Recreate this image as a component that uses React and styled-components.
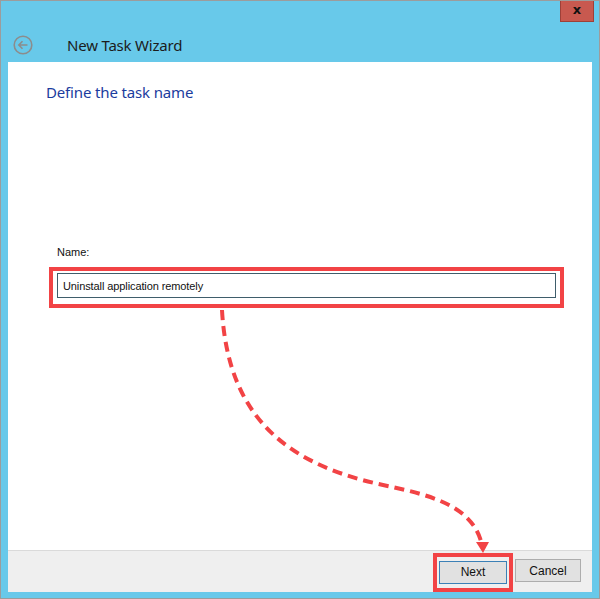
import React from "react";
import styled, { createGlobalStyle } from "styled-components";

const GlobalStyle = createGlobalStyle`
  html, body {
    margin: 0;
    padding: 0;
    background: #ffffff;
  }
  * {
    box-sizing: border-box;
  }
`;

const Window = styled.div`
  position: relative;
  width: 600px;
  height: 599px;
  display: flex;
  flex-direction: column;
  border: 1px solid #9c9c9c;
  background-color: #68c9ea;
  font-family: "Noto Sans", "Open Sans", sans-serif;
  overflow: hidden;
`;

const Controls = styled.div`
  height: 21px;
  display: flex;
  justify-content: flex-end;
  padding-right: 5px;
`;

const CloseButton = styled.div`
  width: 34px;
  height: 22px;
  margin-top: -1px;
  display: flex;
  align-items: center;
  justify-content: center;
  background-color: #c8594f;
  border: 1px solid #9e4038;
  border-top: none;
  color: #111;
  font-family: "DejaVu Sans", sans-serif;
  font-weight: 700;
  font-size: 13px;
  line-height: 1;
  padding-bottom: 2px;
`;

const Header = styled.div`
  height: 40px;
  padding: 5px 0 0 12px;
  display: flex;
  align-items: center;
  gap: 34px;
`;

const Title = styled.div`
  font-size: 15px;
  color: #1c1c1c;
  letter-spacing: -0.2px;
`;

const Body = styled.div`
  flex: 1;
  display: flex;
  flex-direction: column;
  margin: 0 7px 6px 7px;
`;

const Content = styled.div`
  flex: 1;
  background: #ffffff;
  padding: 20px 28px 0 38px;
`;

const Heading = styled.div`
  font-size: 15px;
  line-height: 20px;
  color: #1b3c9e;
  letter-spacing: -0.15px;
`;

const Field = styled.div`
  margin-top: 144px;
  margin-left: 3px;
`;

const Label = styled.div`
  font-family: "Liberation Sans", Arial, sans-serif;
  font-size: 11px;
  line-height: 13px;
  color: #111;
  margin: 0 0 8px 8px;
`;

const Highlight = styled.div`
  border: 4px solid #f24345;
  padding: ${(p) => p.$pad || "2px 4px 6px 4px"};
`;

const Input = styled.input`
  display: block;
  width: 100%;
  height: 25px;
  border: 1px solid #3f5d6b;
  padding: 0 5px;
  font-family: "Liberation Sans", Arial, sans-serif;
  font-size: 11px;
  letter-spacing: -0.1px;
  color: #111;
  background: #fff;
  outline: none;
`;

const Footer = styled.div`
  height: 42px;
  background: #efefef;
  border-top: 1px solid #dadada;
  display: flex;
  justify-content: flex-end;
  align-items: flex-start;
  padding: 2px 11px 0 0;
`;

const Button = styled.button`
  width: ${(p) => p.$w || 67}px;
  height: 23px;
  margin-top: ${(p) => p.$top || 0}px;
  margin-left: ${(p) => p.$left || 0}px;
  background: #e1e1e1;
  border: 1px solid ${(p) => (p.$focused ? "#3b80b6" : "#adadad")};
  font-family: "Liberation Sans", Arial, sans-serif;
  font-size: 12px;
  color: #111;
  padding: 0;
`;

const Overlay = styled.svg`
  position: absolute;
  left: -1px;
  top: -1px;
  pointer-events: none;
`;

const BackIcon = () => (
  <svg width="20" height="20" viewBox="0 0 20 20">
    <circle cx="10" cy="10" r="8.8" fill="none" stroke="#8c8c8c" strokeWidth="1.6" />
    <path d="M14.5 10H6M9.5 6.3L5.8 10l3.7 3.7" fill="none" stroke="#8c8c8c" strokeWidth="1.6" />
  </svg>
);

const Arrow = () => (
  <Overlay width="600" height="599" viewBox="0 0 600 599">
    <path
      d="M222 310 C228 420 290 465 383 485 C430 495 470 505 481 541"
      fill="none"
      stroke="#f24345"
      strokeWidth="4"
      strokeDasharray="10 6"
    />
    <polygon points="476,542 489,542 483,553" fill="#f24345" />
  </Overlay>
);

export default function App() {
  return (
    <>
      <GlobalStyle />
      <Window>
        <Controls>
          <CloseButton>x</CloseButton>
        </Controls>
        <Header>
          <BackIcon />
          <Title>New Task Wizard</Title>
        </Header>
        <Body>
          <Content>
            <Heading>Define the task name</Heading>
            <Field>
              <Label>Name:</Label>
              <Highlight>
                <Input defaultValue="Uninstall application remotely" />
              </Highlight>
            </Field>
          </Content>
          <Footer>
            <Highlight $pad="2px 2px 4px 2px">
              <Button $focused $w={68}>Next</Button>
            </Highlight>
            <Button $top={6} $left={2} $w={66}>Cancel</Button>
          </Footer>
        </Body>
        <Arrow />
      </Window>
    </>
  );
}
